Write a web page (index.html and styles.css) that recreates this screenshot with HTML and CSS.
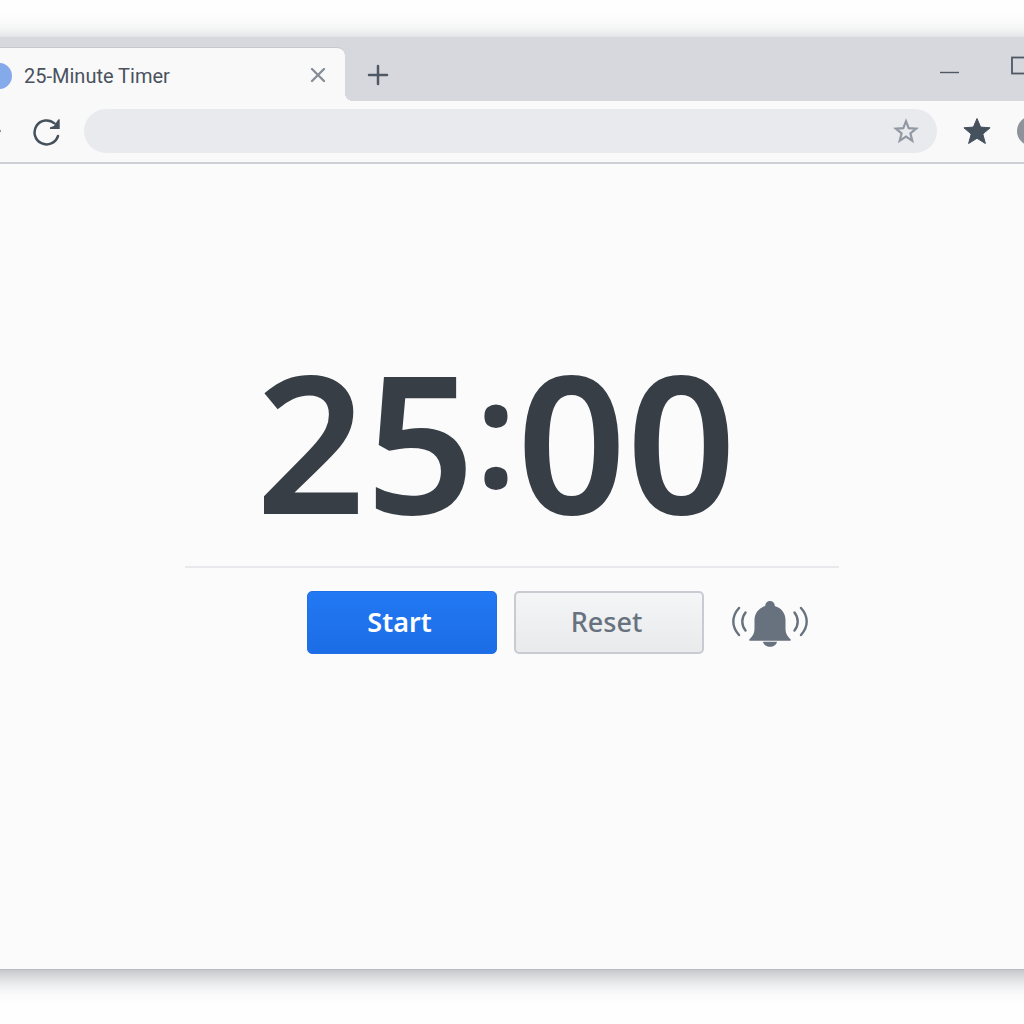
FILE: index.html
```html
<!DOCTYPE html>
<html lang="en">
<head>
    <meta charset="UTF-8">
    <meta name="viewport" content="width=device-width, initial-scale=1.0">
    <title>25-Minute Timer</title>
    <link rel="stylesheet" href="styles.css">
</head>
<body>
    <div class="window">
        <div class="tab-bar">
            <div class="tab">
                <span class="favicon"></span>
                <span class="tab-title">25-Minute Timer</span>
                <button type="button" class="icon-button close-tab" aria-label="Close tab">
                    <svg width="16" height="16" viewBox="0 0 16 16"><path d="M2 1l12 12M14 1L2 13" fill="none" stroke="#868c96" stroke-width="2.300" stroke-linecap="round"/></svg>
                </button>
            </div>
            <button type="button" class="icon-button new-tab" aria-label="New tab">
                <svg width="22" height="22" viewBox="0 0 22 22"><path d="M11 2v18M2 11h18" fill="none" stroke="#4f5966" stroke-width="2.500" stroke-linecap="round"/></svg>
            </button>
            <div class="window-controls">
                <button type="button" class="icon-button" aria-label="Minimize">
                    <svg width="20" height="20" viewBox="0 0 20 20"><path d="M0 16.500h19" fill="none" stroke="#4f5966" stroke-width="1.400"/></svg>
                </button>
                <button type="button" class="icon-button" aria-label="Maximize">
                    <svg width="20" height="20" viewBox="0 0 20 20"><rect x="1" y="1.500" width="17" height="16" fill="none" stroke="#4f5966" stroke-width="1.800"/></svg>
                </button>
            </div>
        </div>

        <div class="toolbar">
            <button type="button" class="icon-button forward" aria-label="Forward">
                <svg width="12" height="12" viewBox="0 0 12 12"><path d="M5 0l6 6-6 6" fill="none" stroke="#868c96" stroke-width="2"/></svg>
            </button>
            <button type="button" class="icon-button reload" aria-label="Reload">
                <svg width="30" height="30" viewBox="0 0 30 30">
                    <path d="M27 20A12 12 0 1 1 23.500 7.400" fill="none" stroke="#46515e" stroke-width="2.500" stroke-linecap="round"/>
                    <path d="M28.700 3.200v9.700h-9.800l.2-1.600 3.800-1.300 4.300-6.400z" fill="#46515e"/>
                </svg>
            </button>
            <div class="address-bar">
                <input type="text" class="address" aria-label="Address">
                <button type="button" class="icon-button" aria-label="Bookmark this page">
                    <svg width="26" height="26" viewBox="0 0 26 26"><path d="M13 3.200l2.700 6.900 7.400.5-5.700 4.700 1.900 7.400-6.300-4.100-6.300 4.100 1.900-7.400-5.700-4.700 7.400-.5z" fill="none" stroke="#9299a3" stroke-width="2.200"/></svg>
                </button>
            </div>
            <button type="button" class="icon-button" aria-label="Favorites">
                <svg width="28" height="28" viewBox="0 0 28 28"><path d="M14 1.500l3.600 8.600 9.500.7-7.300 6.200 2.600 9.500-8.400-5.200-8.400 5.200L8.200 17 .9 10.800l9.500-.7z" fill="#46515e" stroke="#46515e" stroke-width="1" stroke-linejoin="round"/></svg>
            </button>
            <button type="button" class="icon-button profile" aria-label="Profile"></button>
        </div>

        <main class="page">
            <div class="timer">
                <div class="clock"><span id="minutes">25</span><span class="colon">:</span><span id="seconds">00</span></div>
                <div class="controls">
                    <button type="button" id="start" class="button start">Start</button>
                    <button type="button" id="reset" class="button reset">Reset</button>
                    <svg class="bell" width="78" height="48" viewBox="0 0 78 48" role="img" aria-label="Alarm on">
                        <path d="M39 2a4.800 4.800 0 0 0-4.800 5C27.500 9 23.500 14.500 23.500 21v8c0 5-1.500 8-5 11.200-.8.8-.4 1.500.6 1.500h39.800c1 0 1.400-.7.6-1.500-3.500-3.200-5-6.200-5-11.200v-8c0-6.500-4-12-10.700-14A4.800 4.800 0 0 0 39 2z" fill="#68727f"/>
                        <path d="M32 42.800h14c-.7 3.200-3.600 5-7 5s-6.300-1.800-7-5z" fill="#68727f"/>
                        <path d="M14.500 13.500c-4.300 5.500-4.300 12.500 0 18M8 9c-7.600 8.500-7.600 18.500 0 27M63.500 13.500c4.300 5.500 4.300 12.500 0 18M70 9c7.600 8.500 7.600 18.500 0 27" fill="none" stroke="#68727f" stroke-width="2.400" stroke-linecap="round"/>
                    </svg>
                </div>
            </div>
        </main>
    </div>
</body>
</html>
```
FILE: styles.css
```css
body {
    font-family: "Noto Sans", sans-serif;
    background-color: #fefefe;
    margin: 0;
    padding: 37px 0 55px;
    box-sizing: border-box;
    min-height: 100vh;
    display: flex;
    flex-direction: column;
    overflow-x: hidden;
}

/* the window runs past both sides of the screen */
.window {
    flex: 1;
    display: flex;
    flex-direction: column;
    margin: 0 -40px;
    background-color: #fbfbfb;
    box-shadow: 0 1px 1px #b9bbc0, 0 6px 24px rgba(50, 55, 70, 0.4);
}

.icon-button {
    display: flex;
    flex-shrink: 0;
    padding: 0;
    border: none;
    background: none;
    cursor: pointer;
}

.tab-bar {
    display: flex;
    height: 64px;
    padding: 0 40px;
    background-color: #d7d8dd;
    overflow: hidden;
}

.tab {
    position: relative;
    display: flex;
    align-items: center;
    box-sizing: border-box;
    width: 385px;
    margin: 10px 0 0 -40px;
    padding: 2px 19px 0 40px;
    background-color: #f9f9fa;
    border-top: 1px solid #c5c8ce;
    border-radius: 0 8px 0 0;
}

/* curved foot where the tab meets the toolbar */
.tab::after {
    content: "";
    position: absolute;
    left: 100%;
    bottom: 0;
    width: 8px;
    height: 8px;
    background: radial-gradient(circle at 100% 0, #d7d8dd 8px, #f9f9fa 8px);
}

.favicon {
    width: 26px;
    height: 26px;
    margin-left: -14px;
    margin-right: 12px;
    border-radius: 50%;
    background-color: #84aaea;
}

.tab-title {
    flex: 1;
    font-family: Roboto, sans-serif;
    font-size: 20px;
    color: #4a525e;
}

.new-tab {
    align-items: center;
    margin: 11px 0 0 22px;
}

.window-controls {
    display: flex;
    gap: 51px;
    margin: 19px -7px 0 auto;
    align-items: flex-start;
}

.toolbar {
    display: flex;
    align-items: center;
    height: 59px;
    padding: 0 40px 2px;
    background-color: #f9f9fa;
    border-bottom: 2px solid #cdd0d5;
    overflow: hidden;
}

.forward {
    margin-left: -11px;
}

.reload {
    margin: 0 23px 0 30px;
}

.address-bar {
    flex: 1;
    display: flex;
    align-items: center;
    height: 44px;
    margin-right: 26px;
    padding: 0 18px 0 22px;
    border-radius: 22px;
    background-color: #e9eaed;
}

.address {
    flex: 1;
    min-width: 0;
    border: none;
    outline: none;
    background: none;
    font-size: 18px;
}

.profile {
    width: 30px;
    height: 30px;
    margin: 0 -23px 0 26px;
    border-radius: 50%;
    background-color: #8e939b;
}

.page {
    flex: 1;
    display: flex;
    justify-content: center;
    align-items: flex-start;
    padding: 174px 60px 40px;
}

.timer {
    width: 654px;
}

.clock {
    padding-right: 32px;
    font-size: 192px;
    font-weight: 600;
    line-height: 204px;
    text-align: center;
    color: #373e46;
}

/* smaller dots, lifted to the middle of the digits */
.colon {
    font-size: 150px;
    line-height: 0;
    vertical-align: 26px;
}

.controls {
    display: flex;
    align-items: center;
    gap: 17px;
    margin-top: 24px;
    padding: 23px 0 0 122px;
    border-top: 2px solid #e8e9ec;
}

.button {
    box-sizing: border-box;
    width: 190px;
    height: 63px;
    padding: 0 5px 3px 0;
    border-radius: 5px;
    font-family: inherit;
    font-size: 27px;
    cursor: pointer;
}

.start {
    border: 1px solid #2070e6;
    background: linear-gradient(#2279f3, #1c6de6);
    color: #fff;
    font-weight: 600;
}

.reset {
    border: 2px solid #c8ccd2;
    background: linear-gradient(#f4f5f6, #e9eaec);
    color: #68727f;
    font-weight: 500;
}

.bell {
    margin-left: 10px;
}
```
